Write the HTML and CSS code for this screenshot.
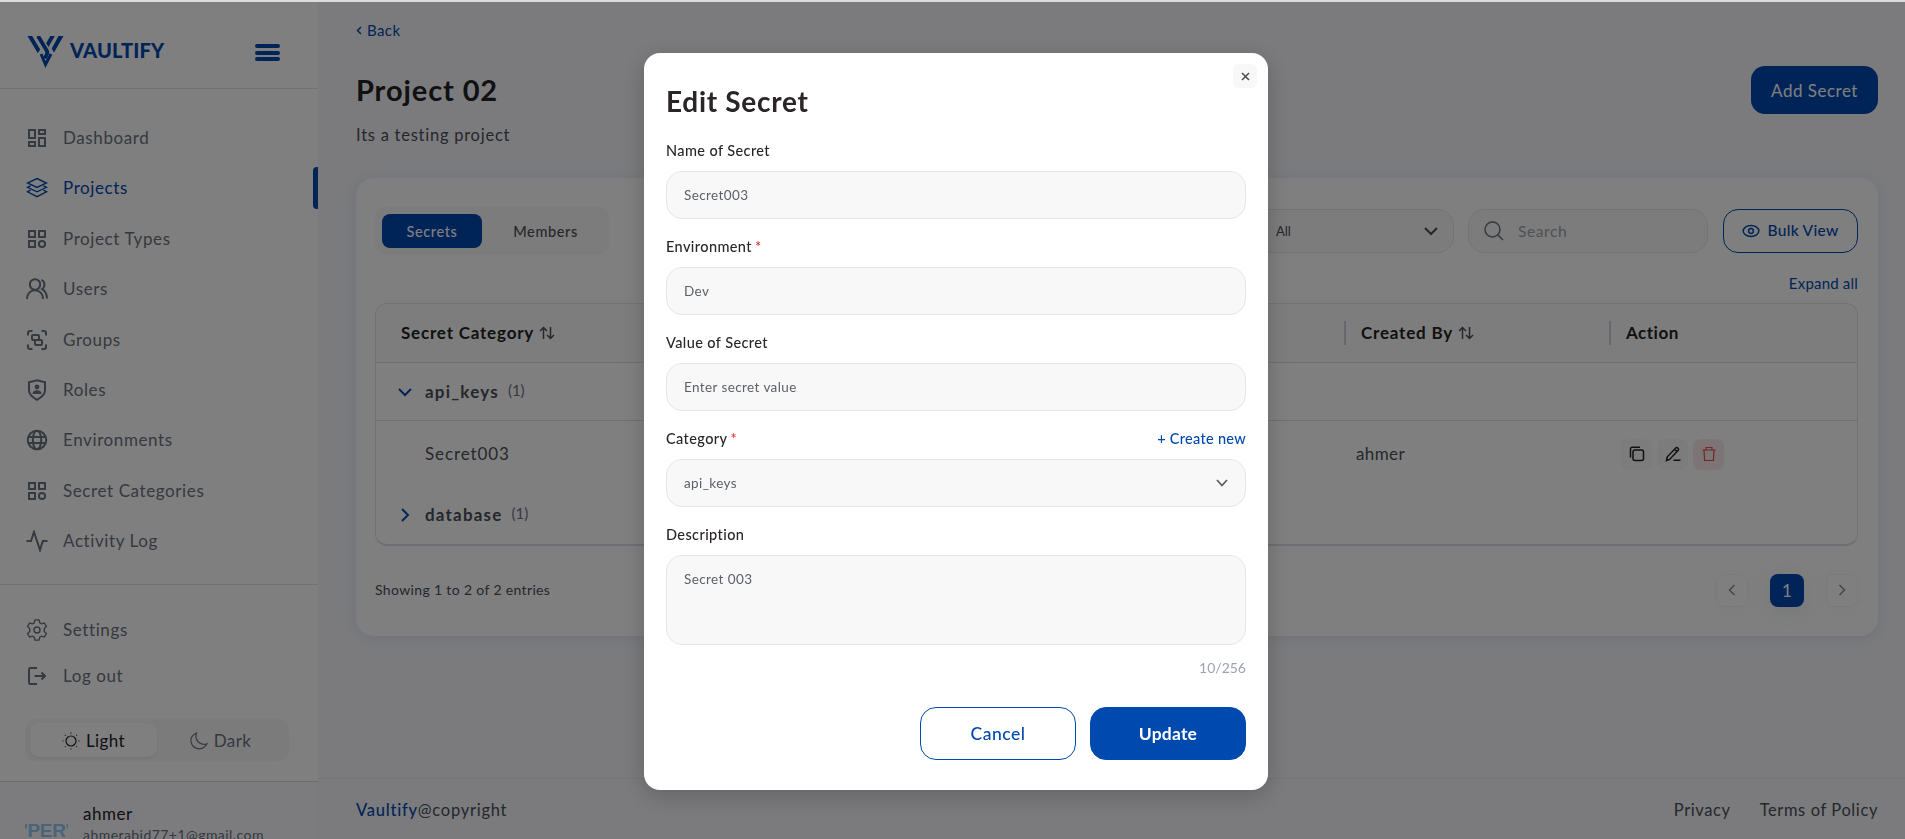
FILE: index.html
```html
<!DOCTYPE html>
<html lang="en">
<head>
    <meta charset="UTF-8">
    <meta name="viewport" content="width=device-width, initial-scale=1.0">
    <title>Vaultify - Project 02</title>
    <link rel="stylesheet" href="styles.css">
</head>
<body>
    <div class="app">
        <aside class="sidebar">
            <div class="brand">
                <svg class="brand-mark" width="37" height="33" viewBox="-0.5 0 37 33">
                    <path class="solid" d="M0 0h4.700l8 13.500-2.400 3.800zM22.700 0h4.600L21 11l-2.300-3.800zM31 0h5l-9.500 16.500-2.300-4z"/>
                    <path d="M10.500 0l8.700 14.500c1 1.800.8 3-.2 4.600l-1.800 3.200" stroke-width="3.800"/>
                    <path d="M13.600 18l4.400 10.500 5.500-10.500" stroke-width="3"/>
                </svg>
                <span class="brand-name">VAULTIFY</span>
                <button class="burger"><i></i><i></i><i></i></button>
            </div>

            <nav class="menu">
                <a class="menu-item">
                    <svg class="icon" viewBox="0 0 22 22"><path d="M3 3h6v8H3zM13 3h6v4h-6zM13 11h6v8h-6zM3 15h6v4H3z"/></svg>
                    <span>Dashboard</span>
                </a>
                <a class="menu-item active">
                    <svg class="icon thin" viewBox="0 0 22 22"><path d="M11 1.500l9.500 4.500-9.500 4.500L1.500 6zM4.500 8.800L1.500 10.300l9.500 4.500 9.500-4.500-3-1.500M4.500 13.200l-3 1.600 9.500 4.900 9.500-4.900-3-1.600"/></svg>
                    <span>Projects</span>
                </a>
                <a class="menu-item">
                    <svg class="icon" viewBox="0 0 22 22"><path d="M3 3h6v6H3zM13 3h6v6h-6zM3 13h6v6H3z"/><circle cx="16" cy="16" r="3.100"/></svg>
                    <span>Project Types</span>
                </a>
                <a class="menu-item">
                    <svg class="icon" viewBox="0 0 22 22"><circle cx="9" cy="6.500" r="5.200"/><path d="M1 21c0-5.500 3.500-8.700 8-8.700s8 3.200 8 8.700M15.500 1.800c3.600 1.700 4 6.600.6 9.300 3.300 2 4.900 5.200 4.900 9.400"/></svg>
                    <span>Users</span>
                </a>
                <a class="menu-item">
                    <svg class="icon" viewBox="0 0 22 22"><path d="M2 6.500V4a2 2 0 0 1 2-2h2.500M15.500 2H18a2 2 0 0 1 2 2v2.500M20 15.500V18a2 2 0 0 1-2 2h-2.500M6.500 20H4a2 2 0 0 1-2-2v-2.500"/><rect x="6" y="6" width="7" height="5" rx="1"/><rect x="9" y="11" width="7" height="5" rx="1"/></svg>
                    <span>Groups</span>
                </a>
                <a class="menu-item">
                    <svg class="icon" viewBox="0 0 22 22"><path d="M11 1.200l8 2v8.300c0 4-3.500 6.700-8 9.300-4.500-2.600-8-5.300-8-9.300V3.200z"/><circle class="solid" cx="11" cy="8" r="2.400"/><path class="solid" d="M6.500 15c0-2.700 2-3.700 4.500-3.700s4.500 1 4.500 3.700z"/></svg>
                    <span>Roles</span>
                </a>
                <a class="menu-item">
                    <svg class="icon" viewBox="0 0 22 22"><circle cx="11" cy="11" r="9.300"/><ellipse cx="11" cy="11" rx="4.200" ry="9.300"/><path d="M2.500 8h17M2.500 14h17"/></svg>
                    <span>Environments</span>
                </a>
                <a class="menu-item">
                    <svg class="icon" viewBox="0 0 22 22"><path d="M3 3h6v6H3zM13 3h6v6h-6zM3 13h6v6H3z"/><circle cx="16" cy="16" r="3.100"/></svg>
                    <span>Secret Categories</span>
                </a>
                <a class="menu-item">
                    <svg class="icon" viewBox="0 0 22 22"><path d="M0.500 11H5L8 2l6 18 2.800-9h4.700"/></svg>
                    <span>Activity Log</span>
                </a>
            </nav>

            <div class="menu-bottom">
                <a class="menu-item">
                    <svg class="icon thin" viewBox="0 0 22 22"><path d="M9 .9h4l.8 2.900 1.700 1 2.900-.8 2 3.500-2.100 2.100v2.800l2.100 2.100-2 3.500-2.900-.8-1.700 1-.8 2.900H9l-.8-2.900-1.700-1-2.900.8-2-3.500 2.100-2.100V9.600L1.600 7.500l2-3.500 2.900.8 1.700-1z"/><circle cx="11" cy="11" r="3"/></svg>
                    <span>Settings</span>
                </a>
                <a class="menu-item">
                    <svg class="icon" viewBox="0 0 22 22"><path d="M11 3H4.500C3.500 3 3 3.500 3 4.500v13c0 1 .5 1.500 1.500 1.500H11M8.500 11H19M15.500 7.500L19 11l-3.500 3.500"/></svg>
                    <span>Log out</span>
                </a>
                <div class="theme">
                    <div class="theme-option selected">
                        <svg width="18" height="18" viewBox="0 0 18 18"><circle cx="9" cy="9" r="5"/><path d="M9 .5v1M9 16.500v1M.5 9h1M16.500 9h1M3 3l.6.6M14.400 14.400l.6.6M3 15l.6-.6M14.400 3.600L15 3"/></svg>
                        <span>Light</span>
                    </div>
                    <div class="theme-option">
                        <svg width="18" height="18" viewBox="0 0 18 18"><path d="M6.500 1C2 2.500 0 7 1.300 11c1.700 5.500 8.500 7.500 13 4 1.200-.9 2-2 2.600-3.300C10.500 14 4 8.500 6.500 1z"/></svg>
                        <span>Dark</span>
                    </div>
                </div>
            </div>

            <div class="profile">
                <div class="avatar">'PER'</div>
                <div>
                    <p class="profile-name">ahmer</p>
                    <p class="profile-mail">ahmerabid77+1@gmail.com</p>
                </div>
            </div>
        </aside>

        <main class="main">
            <a class="back"><svg width="6" height="9" viewBox="0 0 6 9"><path d="M5 1L1.500 4.500 5 8"/></svg>Back</a>
            <header class="page-head">
                <div>
                    <h1>Project 02</h1>
                    <p class="subtitle">Its a testing project</p>
                </div>
                <button class="btn-add">Add Secret</button>
            </header>

            <section class="card">
                <div class="toolbar">
                    <div class="tabs">
                        <button class="tab active">Secrets</button>
                        <button class="tab">Members</button>
                    </div>
                    <div class="filters">
                        <div class="filter-select">
                            <span>All</span>
                            <svg width="14" height="9" viewBox="0 0 14 9"><path d="M1 1l6 6 6-6"/></svg>
                        </div>
                        <div class="search">
                            <svg width="20" height="20" viewBox="0 0 20 20"><circle cx="8.500" cy="8.500" r="7.500"/><path d="M14 14l5 5"/></svg>
                            <span>Search</span>
                        </div>
                        <button class="btn-bulk">
                            <svg width="18" height="14" viewBox="0 0 18 14"><ellipse cx="9" cy="7" rx="7.800" ry="5.500"/><circle cx="9" cy="7" r="2.400"/></svg>
                            Bulk View
                        </button>
                    </div>
                </div>
                <a class="expand">Expand all</a>

                <div class="table">
                    <div class="row head">
                        <div class="cell-name">Secret Category <svg class="sort" viewBox="0 0 16 14"><path d="M4.500 13V1.500M1 5l3.500-3.500L8 5M11.500 1v11.500M8 9l3.500 3.500L15 9"/></svg></div>
                        <div class="cell-created">Created By <svg class="sort" viewBox="0 0 16 14"><path d="M4.500 13V1.500M1 5l3.500-3.500L8 5M11.500 1v11.500M8 9l3.500 3.500L15 9"/></svg></div>
                        <div class="cell-action">Action</div>
                    </div>
                    <div class="row group">
                        <svg class="caret" viewBox="0 0 14 14"><path d="M1 4l6 6 6-6"/></svg>
                        <b>api_keys</b> <span class="count">(1)</span>
                    </div>
                    <div class="row secret">
                        <div class="cell-name">Secret003</div>
                        <div class="cell-created">ahmer</div>
                        <div class="cell-action">
                            <button class="action"><svg width="16" height="16" viewBox="0 0 16 16"><rect x="4" y="4" width="10.500" height="10.500" rx="2"/><path d="M1.500 11.500V3A1.800 1.800 0 0 1 3.300 1.200H11"/></svg></button>
                            <button class="action"><svg width="16" height="16" viewBox="0 0 16 16"><path d="M1.500 14.500l.8-3.700L11 1.700c1-.8 3.300 1 2.400 2.400l-8.800 9.300zM9.500 3.200L12 5.700M8.500 14.300h7"/></svg></button>
                            <button class="action danger"><svg width="14" height="16" viewBox="0 0 14 16"><path d="M.5 4h13M4 4V1.500h6V4M2 4l.6 10.500h8.800L12 4"/></svg></button>
                        </div>
                    </div>
                    <div class="row group closed">
                        <svg class="caret" viewBox="0 0 14 14"><path d="M4 1l6 6-6 6"/></svg>
                        <b>database</b> <span class="count">(1)</span>
                    </div>
                </div>

                <div class="table-foot">
                    <span>Showing 1 to 2 of 2 entries</span>
                    <div class="pages">
                        <button class="page"><svg width="8" height="12" viewBox="0 0 8 12"><path d="M6.500 1l-5 5 5 5"/></svg></button>
                        <button class="page current">1</button>
                        <button class="page"><svg width="8" height="12" viewBox="0 0 8 12"><path d="M1.500 1l5 5-5 5"/></svg></button>
                    </div>
                </div>
            </section>

            <footer class="footer">
                <span><b>Vaultify</b>@copyright</span>
                <div class="footer-links">
                    <a>Privacy</a>
                    <a>Terms of Policy</a>
                </div>
            </footer>
        </main>
    </div>

    <div class="overlay">
        <div class="modal">
            <button class="close"><svg width="9" height="9" viewBox="0 0 9 9"><path d="M1 1l7 7M8 1L1 8"/></svg></button>
            <h2>Edit Secret</h2>

            <div class="label"><span>Name of Secret</span></div>
            <div class="field">Secret003</div>

            <div class="label"><span>Environment<em>*</em></span></div>
            <div class="field">Dev</div>

            <div class="label"><span>Value of Secret</span></div>
            <div class="field">Enter secret value</div>

            <div class="label"><span>Category<em>*</em></span><a>+ Create new</a></div>
            <div class="field">api_keys<svg width="12" height="8" viewBox="0 0 12 8"><path d="M1 1l5 5.500L11 1"/></svg></div>

            <div class="label"><span>Description</span></div>
            <div class="field area">Secret 003</div>
            <p class="counter">10/256</p>

            <div class="modal-actions">
                <button class="btn-cancel">Cancel</button>
                <button class="btn-update">Update</button>
            </div>
        </div>
    </div>
</body>
</html>
```
FILE: styles.css
```css
* {
    box-sizing: border-box;
}
body {
    margin: 0;
    height: 839px;
    overflow: hidden;
    font-family: Lato, "Open Sans", sans-serif;
    font-size: 16px;
    line-height: 20px;
    color: #4b4f58;
    border-top: 2px solid #dcdcdc;
    background: #f6f7fc;
}
p, h1, h2 {
    margin: 0;
}
button {
    font-family: inherit;
    padding: 0;
    border: none;
    background: none;
    cursor: pointer;
}
svg {
    fill: none;
    stroke: currentColor;
    stroke-width: 1.5;
    flex-shrink: 0;
}
.app {
    display: flex;
    height: 837px;
}

/* sidebar */
.sidebar {
    width: 318px;
    flex-shrink: 0;
    height: 837px;
    overflow: hidden;
    background: #fff;
}
.brand {
    height: 87px;
    padding: 0 38px 0 27px;
    display: flex;
    align-items: center;
    color: #0049af;
    border-bottom: 1px solid #e2e2e4;
}
.brand-mark {
    margin-top: 14px;
}
.brand-name {
    font-size: 20px;
    font-weight: 900;
    letter-spacing: 0.2px;
    margin: 9px 0 0 6px;
}
.burger {
    width: 25px;
    height: 17px;
    margin: 15px 0 0 auto;
    display: flex;
    flex-direction: column;
    justify-content: space-between;
}
.burger i {
    height: 4px;
    border-radius: 2px;
    background: #0049af;
}
.menu {
    height: 495px;
    padding-top: 28px;
    display: flex;
    flex-direction: column;
    gap: 8.4px;
}
.menu-item {
    height: 42px;
    padding-left: 26px;
    display: flex;
    align-items: center;
    gap: 15px;
    color: #6b7280;
    font-size: 17px;
    letter-spacing: 0.6px;
}
.menu-item.active {
    color: #0049af;
    position: relative;
}
.menu-item.active::after {
    content: "";
    position: absolute;
    top: 0;
    right: 0;
    width: 5px;
    height: 42px;
    border-radius: 4px 0 0 4px;
    background: #0049af;
}
.icon {
    width: 22px;
    height: 22px;
    stroke-width: 2;
}
.icon.thin {
    stroke-width: 1.4;
}
.solid {
    fill: currentColor;
    stroke: none;
}
.menu-bottom {
    height: 197px;
    padding-top: 22px;
    border-top: 1px solid #e2e2e4;
}
.menu-bottom .menu-item {
    height: 46px;
}
.theme {
    width: 264px;
    height: 42px;
    margin: 20px 0 0 25px;
    padding: 4px 5px;
    display: flex;
    border-radius: 10px;
    background: #f7f7f7;
    color: #6b7280;
    font-size: 17px;
    letter-spacing: 0.4px;
}
.theme-option {
    width: 127px;
    display: flex;
    align-items: center;
    justify-content: center;
    gap: 6px;
    padding-top: 1px;
    border-radius: 9px;
}
.theme-option svg {
    stroke-width: 1.2;
}
.theme-option.selected {
    color: #222;
    background: #fff;
    box-shadow: 0 1px 3px rgba(0, 0, 0, 0.08);
}
.profile {
    height: 80px;
    padding: 22px 0 0 25px;
    display: flex;
    gap: 15px;
    border-top: 1px solid #dadbe0;
    background: #f8f9fc;
}
.profile-name {
    color: #222;
    font-size: 17px;
    letter-spacing: 0.5px;
}
.profile-mail {
    font-size: 14px;
    color: #6b7280;
    margin-top: 1px;
    letter-spacing: 0.45px;
}
.avatar {
    width: 43px;
    height: 43px;
    border-radius: 50%;
    overflow: hidden;
    display: flex;
    justify-content: center;
    padding-top: 17px;
    font-family: "Liberation Sans", sans-serif;
    font-size: 19px;
    font-weight: bold;
    letter-spacing: -0.3px;
    color: #8fc8f0;
}

/* page */
.main {
    flex: 1;
    padding: 0 27px 0 38px;
}
.back {
    display: flex;
    align-items: center;
    gap: 5px;
    height: 20px;
    margin-top: 18px;
    font-size: 15px;
    color: #0049af;
    letter-spacing: 0.4px;
}
.page-head {
    display: flex;
    justify-content: space-between;
    height: 138px;
    padding-top: 26px;
}
h1 {
    font-size: 29px;
    line-height: 36px;
    margin-top: 6px;
    letter-spacing: 0.9px;
    color: #222;
}
.subtitle {
    margin-top: 17px;
    font-size: 16.5px;
    letter-spacing: 0.75px;
}
.btn-add {
    width: 127px;
    height: 48px;
    border-radius: 14px;
    background: #0049af;
    color: #fff;
    font-size: 17px;
    letter-spacing: 0.5px;
}
.card {
    height: 458px;
    padding: 29px 20px 0 19px;
    border-radius: 18px;
    background: #fff;
    box-shadow: 0 2px 16px rgba(60, 70, 120, 0.1);
}
.toolbar {
    display: flex;
    justify-content: space-between;
}
.tabs {
    width: 234px;
    height: 48px;
    padding: 7px;
    display: flex;
    border-radius: 10px;
    background: #f9f9f9;
}
.tab {
    width: 100px;
    height: 34px;
    flex-shrink: 0;
    border-radius: 8px;
    font-size: 14.5px;
    font-weight: 500;
    letter-spacing: 0.6px;
    color: #4b4f58;
}
.tab + .tab {
    width: 127px;
}
.tab.active {
    background: #0049af;
    color: #fff;
}
.filters {
    display: flex;
    gap: 15px;
    padding-top: 2px;
}
.filter-select, .search {
    width: 240px;
    height: 44px;
    padding: 0 15px;
    display: flex;
    align-items: center;
    border: 1px solid #e7e7e9;
    border-radius: 16px;
    background: #f9f9f9;
}
.filter-select {
    justify-content: space-between;
    margin-right: -1px;
    padding-left: 61px;
    font-size: 13px;
}
.filter-select svg {
    stroke-width: 2;
}
.search {
    gap: 14px;
    color: #9ca3af;
    font-size: 15.5px;
    letter-spacing: 0.6px;
}
.search svg {
    color: #6b7280;
}
.btn-bulk {
    width: 135px;
    height: 44px;
    display: flex;
    align-items: center;
    justify-content: center;
    gap: 7px;
    padding-bottom: 2px;
    border: 1px solid #0049af;
    border-radius: 15px;
    color: #0049af;
    font-size: 15.5px;
    font-weight: 500;
    letter-spacing: 0.3px;
}
.btn-bulk svg {
    margin-top: 2px;
}
.expand {
    display: block;
    margin: 18px 0 10px;
    text-align: right;
    font-size: 15px;
    letter-spacing: 0.2px;
    color: #0049af;
}
.table {
    height: 243px;
    border: 1px solid #e4e4ea;
    border-bottom: 2px solid #dfe1ec;
    border-radius: 12px;
}
.row {
    display: flex;
    align-items: center;
    font-size: 17px;
}
.row.head {
    height: 59px;
    border-bottom: 1px solid #e0e0e4;
    border-radius: 12px 12px 0 0;
    background: #fbfbfb;
    font-weight: 700;
    color: #222;
    letter-spacing: 0.8px;
}
.sort {
    width: 16px;
    height: 14px;
    vertical-align: -1px;
    color: #4b4f58;
}
.cell-name {
    width: 968px;
    padding-left: 25px;
}
.cell-created {
    width: 265px;
}
.head .cell-created, .head .cell-action {
    height: 24px;
    line-height: 24px;
    padding-left: 15px;
    border-left: 2px solid #cfd0dc;
}
.head .cell-action {
    letter-spacing: 0.5px;
}
.row.group {
    height: 58px;
    padding-left: 22px;
    border-bottom: 1px solid #e0e0e4;
}
.row.group.closed {
    height: 55px;
    border: none;
}
.caret {
    width: 14px;
    height: 14px;
    margin-right: 13px;
    stroke-width: 2;
    color: #0049af;
}
.row b {
    letter-spacing: 1.2px;
}
.count {
    margin: -3px 0 0 9px;
    font-size: 15px;
    color: #6b7280;
}
.row.secret {
    height: 66px;
}
.secret .cell-name {
    padding-left: 49px;
    letter-spacing: 0.9px;
}
.secret .cell-created {
    padding-left: 12px;
    letter-spacing: 0.4px;
}
.secret .cell-action {
    display: flex;
    gap: 5px;
    padding-left: 12px;
}
.action {
    width: 31px;
    height: 31px;
    display: flex;
    align-items: center;
    justify-content: center;
    border-radius: 7px;
    background: #f9f9f9;
    color: #222;
}
.action.danger {
    color: #e5484d;
    background: #faebeb;
}
.action.danger svg {
    stroke-width: 1.2;
}
.table-foot {
    display: flex;
    align-items: center;
    justify-content: space-between;
    margin-top: 28px;
    font-size: 14px;
    letter-spacing: 0.35px;
}
.table-foot > span {
    margin-top: -2px;
}
.pages {
    display: flex;
    gap: 22px;
}
.page {
    width: 32px;
    height: 33px;
    border: 1px solid #f3f3f3;
    border-radius: 8px;
    color: #8b8d92;
    box-shadow: 0 2px 14px rgba(80, 100, 90, 0.05);
}
.page.current {
    width: 34px;
    border: none;
    background: #0049af;
    color: #fff;
    font-size: 17px;
    box-shadow: 0 4px 24px rgba(60, 90, 110, 0.1);
}
.footer {
    display: flex;
    align-items: center;
    justify-content: space-between;
    height: 61px;
    margin: 142px -27px 0 -38px;
    padding: 2px 27px 0 38px;
    border-top: 1px solid #e9eaf0;
    font-size: 16.5px;
    letter-spacing: 0.75px;
}
.footer b {
    font-weight: 500;
    color: #0049af;
}
.footer-links {
    display: flex;
    gap: 29px;
    letter-spacing: 0.6px;
}

/* edit dialog */
.overlay {
    position: fixed;
    top: 2px;
    right: 0;
    bottom: 0;
    left: 0;
    display: flex;
    justify-content: center;
    padding: 51px 0 0 7px;
    background: rgba(0, 0, 0, 0.5);
}
.modal {
    position: relative;
    width: 624px;
    height: 737px;
    padding: 30px 22px 0;
    border-radius: 16px;
    background: #fff;
    box-shadow: 0 6px 24px rgba(0, 0, 0, 0.2);
}
.close {
    position: absolute;
    top: 11px;
    right: 11px;
    width: 24px;
    height: 24px;
    display: flex;
    align-items: center;
    justify-content: center;
    border-radius: 6px;
    background: #f8f8f8;
    color: #4a4a4a;
}
h2 {
    font-size: 28px;
    line-height: 36px;
    margin-bottom: 22px;
    letter-spacing: 0.7px;
    color: #2a2526;
}
.label {
    display: flex;
    justify-content: space-between;
    height: 20px;
    margin-bottom: 10px;
    font-size: 14.5px;
    font-weight: 500;
    letter-spacing: 0.4px;
    color: #2a2526;
}
.label em {
    margin-left: 3px;
    font-style: normal;
    color: #e5252a;
}
.label a {
    color: #0049af;
    letter-spacing: 0.3px;
}
.field {
    height: 48px;
    padding: 0 17px;
    margin-bottom: 18px;
    display: flex;
    align-items: center;
    justify-content: space-between;
    border: 1px solid #e6e6e8;
    border-radius: 16px;
    background: #f8f8f8;
    font-size: 13.5px;
    letter-spacing: 0.4px;
    color: #5d6068;
}
.field svg {
    stroke-width: 1.8;
}
.field.area {
    height: 90px;
    padding-top: 13px;
    align-items: flex-start;
    margin-bottom: 14px;
}
.counter {
    margin-top: -1px;
    text-align: right;
    font-size: 14px;
    color: #9ca3af;
}
.modal-actions {
    display: flex;
    justify-content: flex-end;
    gap: 14px;
    margin-top: 29px;
}
.modal-actions button {
    width: 156px;
    height: 53px;
    border: 1px solid #0049af;
    border-radius: 16px;
    font-size: 17.5px;
    font-weight: 500;
    letter-spacing: 0.5px;
    color: #0049af;
}
.modal-actions .btn-update {
    background: #0049af;
    color: #fff;
    font-weight: 700;
    letter-spacing: 0.2px;
}
```
